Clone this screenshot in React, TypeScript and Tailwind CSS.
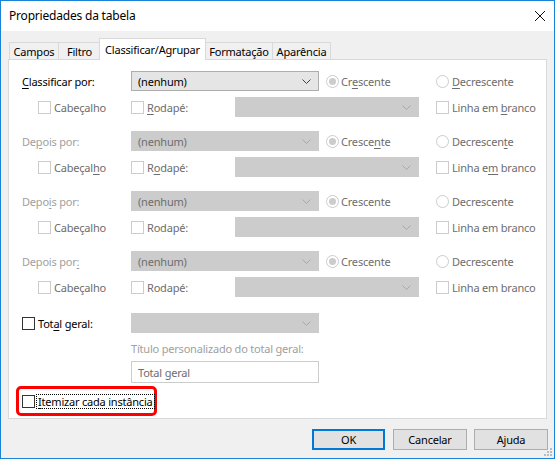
import React from 'react'

const font = "font-['Noto_Sans','Liberation_Sans',sans-serif]"

// label with an access-key underline at a given index
function Acc({ text, at }: { text: string; at?: number }) {
  if (at === undefined) return <>{text}</>
  return (
    <>
      {text.slice(0, at)}
      <span className="underline underline-offset-[2px] decoration-1">{text[at]}</span>
      {text.slice(at + 1)}
    </>
  )
}

function Check({ on }: { on?: boolean }) {
  return (
    <span
      className={`inline-block w-[13px] h-[13px] shrink-0 bg-white border ${on ? 'border-[#333333]' : 'border-[#cccccc]'}`}
    />
  )
}

function Radio({ checked }: { checked?: boolean }) {
  return (
    <span className="flex w-[13px] h-[13px] shrink-0 items-center justify-center rounded-full border border-[#cccccc] bg-white">
      {checked && <span className="w-[7px] h-[7px] rounded-full bg-[#cccccc]" />}
    </span>
  )
}

function Chevron({ color }: { color: string }) {
  return (
    <svg width="9" height="5" viewBox="0 0 9 5" className="shrink-0">
      <polyline points="0.5,0.5 4.5,4.5 8.5,0.5" fill="none" stroke={color} strokeWidth="1" />
    </svg>
  )
}

function Combo({ width, text, enabled }: { width: string; text?: string; enabled?: boolean }) {
  return (
    <div
      className={`${width} h-[20px] shrink-0 flex items-center justify-between pl-[6px] pr-[7px] border ${
        enabled ? 'bg-[#e5e5e5] border-[#adadad] text-black' : 'bg-[#cccccc] border-[#cccccc] text-[#6d6d6d]'
      }`}
    >
      <span>{text}</span>
      <Chevron color={enabled ? '#404040' : '#a8a8a8'} />
    </div>
  )
}

type Group = {
  label: string
  labelAt?: number
  enabled?: boolean
  cab?: number
  rod?: number
  cres?: number
  dec?: number
  linha?: number
}

const groups: Group[] = [
  { label: 'Classificar por:', labelAt: 0, enabled: true, rod: 0, cres: 2, dec: 0, linha: 9 },
  { label: 'Depois por:', labelAt: 2, cab: 7, rod: 1, cres: 6, dec: 9, linha: 7 },
  { label: 'Depois por:', labelAt: 4 },
  { label: 'Depois por:', labelAt: 10 },
]

function SortGroup({ g, first }: { g: Group; first?: boolean }) {
  return (
    <div className={`flex flex-col gap-[6px] ${first ? '' : 'mt-[14px]'}`}>
      <div className="flex items-center h-[20px]">
        <div className={`w-[122px] pl-[13px] ${g.enabled ? 'text-black' : 'text-[#a0a0a0]'}`}>
          <Acc text={g.label} at={g.labelAt} />
        </div>
        <Combo width="w-[188px]" text="(nenhum)" enabled={g.enabled} />
        <div className="ml-[7px] w-[110px] flex items-center gap-[2px] text-[#6d6d6d]">
          <Radio checked />
          <span><Acc text="Crescente" at={g.cres} /></span>
        </div>
        <div className="flex items-center gap-[3px] text-[#6d6d6d]">
          <Radio />
          <span><Acc text="Decrescente" at={g.dec} /></span>
        </div>
      </div>
      <div className="flex items-center h-[20px] text-[#6d6d6d]">
        <div className="w-[122px] pl-[29px] flex items-center gap-[3px]">
          <Check />
          <span><Acc text="Cabeçalho" at={g.cab} /></span>
        </div>
        <div className="w-[104px] flex items-center gap-[3px]">
          <Check />
          <span><Acc text="Rodapé:" at={g.rod} /></span>
        </div>
        <Combo width="w-[184px]" />
        <div className="ml-[17px] flex items-center gap-[3px]">
          <Check />
          <span><Acc text="Linha em branco" at={g.linha} /></span>
        </div>
      </div>
    </div>
  )
}

const tabs = [
  { name: 'Campos', w: 'w-[50px]', ml: '' },
  { name: 'Filtro', w: 'w-[43px]', ml: '-ml-px' },
  { name: 'Classificar/Agrupar', w: 'w-[107px]', ml: '-ml-[2px]', active: true },
  { name: 'Formatação', w: 'w-[68px]', ml: '-ml-px' },
  { name: 'Aparência', w: 'w-[59px]', ml: '-ml-px' },
]

export default function App() {
  return (
    <div className={`${font} text-[11px] tracking-[-0.2px] leading-none whitespace-nowrap relative w-[555px] h-[459px] border border-[#1883d7] flex flex-col bg-[#f0f0f0] text-black`}>
      {/* Title bar */}
      <div className="h-[30px] shrink-0 bg-white flex items-center justify-between pl-[8px] pr-[9px]">
        <span className="text-[12px]">Propriedades da tabela</span>
        <svg width="10" height="10" viewBox="0 0 10 10">
          <line x1="0" y1="0" x2="10" y2="10" stroke="#111" strokeWidth="1" />
          <line x1="10" y1="0" x2="0" y2="10" stroke="#111" strokeWidth="1" />
        </svg>
      </div>

      <div className="flex-1 flex flex-col px-[7px]">
        {/* Tabs */}
        <div className="h-[28px] flex items-end pl-px">
          {tabs.map((t) => (
            <div
              key={t.name}
              className={`${t.w} ${t.ml} shrink-0 flex items-center justify-center border-t border-l border-r border-[#d9d9d9] ${
                t.active ? 'h-[22px] -mb-px bg-white relative z-10' : 'h-[17px] bg-[#f0f0f0]'
              }`}
            >
              {t.name}
            </div>
          ))}
        </div>

        {/* Panel */}
        <div className="h-[360px] border border-[#d9d9d9] bg-white flex flex-col pt-[11px]">
          {groups.map((g, i) => (
            <SortGroup key={i} g={g} first={i === 0} />
          ))}

          <div className="flex items-center h-[20px] mt-[16px]">
            <div className="w-[122px] pl-[13px] flex items-center gap-[3px]">
              <Check on />
              <span><Acc text="Total geral:" at={3} /></span>
            </div>
            <Combo width="w-[188px]" />
          </div>
          <div className="ml-[122px] mt-[8px] h-[15px] flex items-center text-[#a0a0a0]">
            Título personalizado do total geral:
          </div>
          <div className="ml-[122px] mt-[5px] w-[188px] h-[22px] border border-[#cccccc] bg-white pl-[6px] flex items-center text-[#6d6d6d]">
            Total geral
          </div>
          <div className="ml-[7px] mt-[3px] w-[141px] h-[30px] border-[3px] border-[#ff0000] rounded-[5px] flex items-center pl-[3px] gap-[2px]">
            <Check on />
            <span className="outline outline-1 outline-dotted outline-black px-px py-[1px]">
              <Acc text="Itemizar cada instância" at={0} />
            </span>
          </div>
        </div>

        {/* Buttons */}
        <div className="mt-[10px] flex justify-end -mr-px">
          <button className="w-[73px] h-[21px] border-2 border-[#0078d7] bg-[#e1e1e1] flex items-center justify-center">
            OK
          </button>
          <button className="ml-[8px] w-[74px] h-[21px] border border-[#adadad] bg-[#e1e1e1] flex items-center justify-center">
            Cancelar
          </button>
          <button className="ml-[7px] w-[74px] h-[21px] border border-[#adadad] bg-[#e1e1e1] flex items-center justify-center">
            Ajuda
          </button>
        </div>
      </div>

      {/* Size grip */}
      <svg width="9" height="9" viewBox="0 0 9 9" className="absolute right-[1px] bottom-[1px]">
        {[
          [6, 0], [3, 3], [6, 3], [0, 6], [3, 6], [6, 6],
        ].map(([x, y], i) => (
          <rect key={i} x={x} y={y} width="2" height="2" fill="#bcbcbc" />
        ))}
      </svg>
    </div>
  )
}
